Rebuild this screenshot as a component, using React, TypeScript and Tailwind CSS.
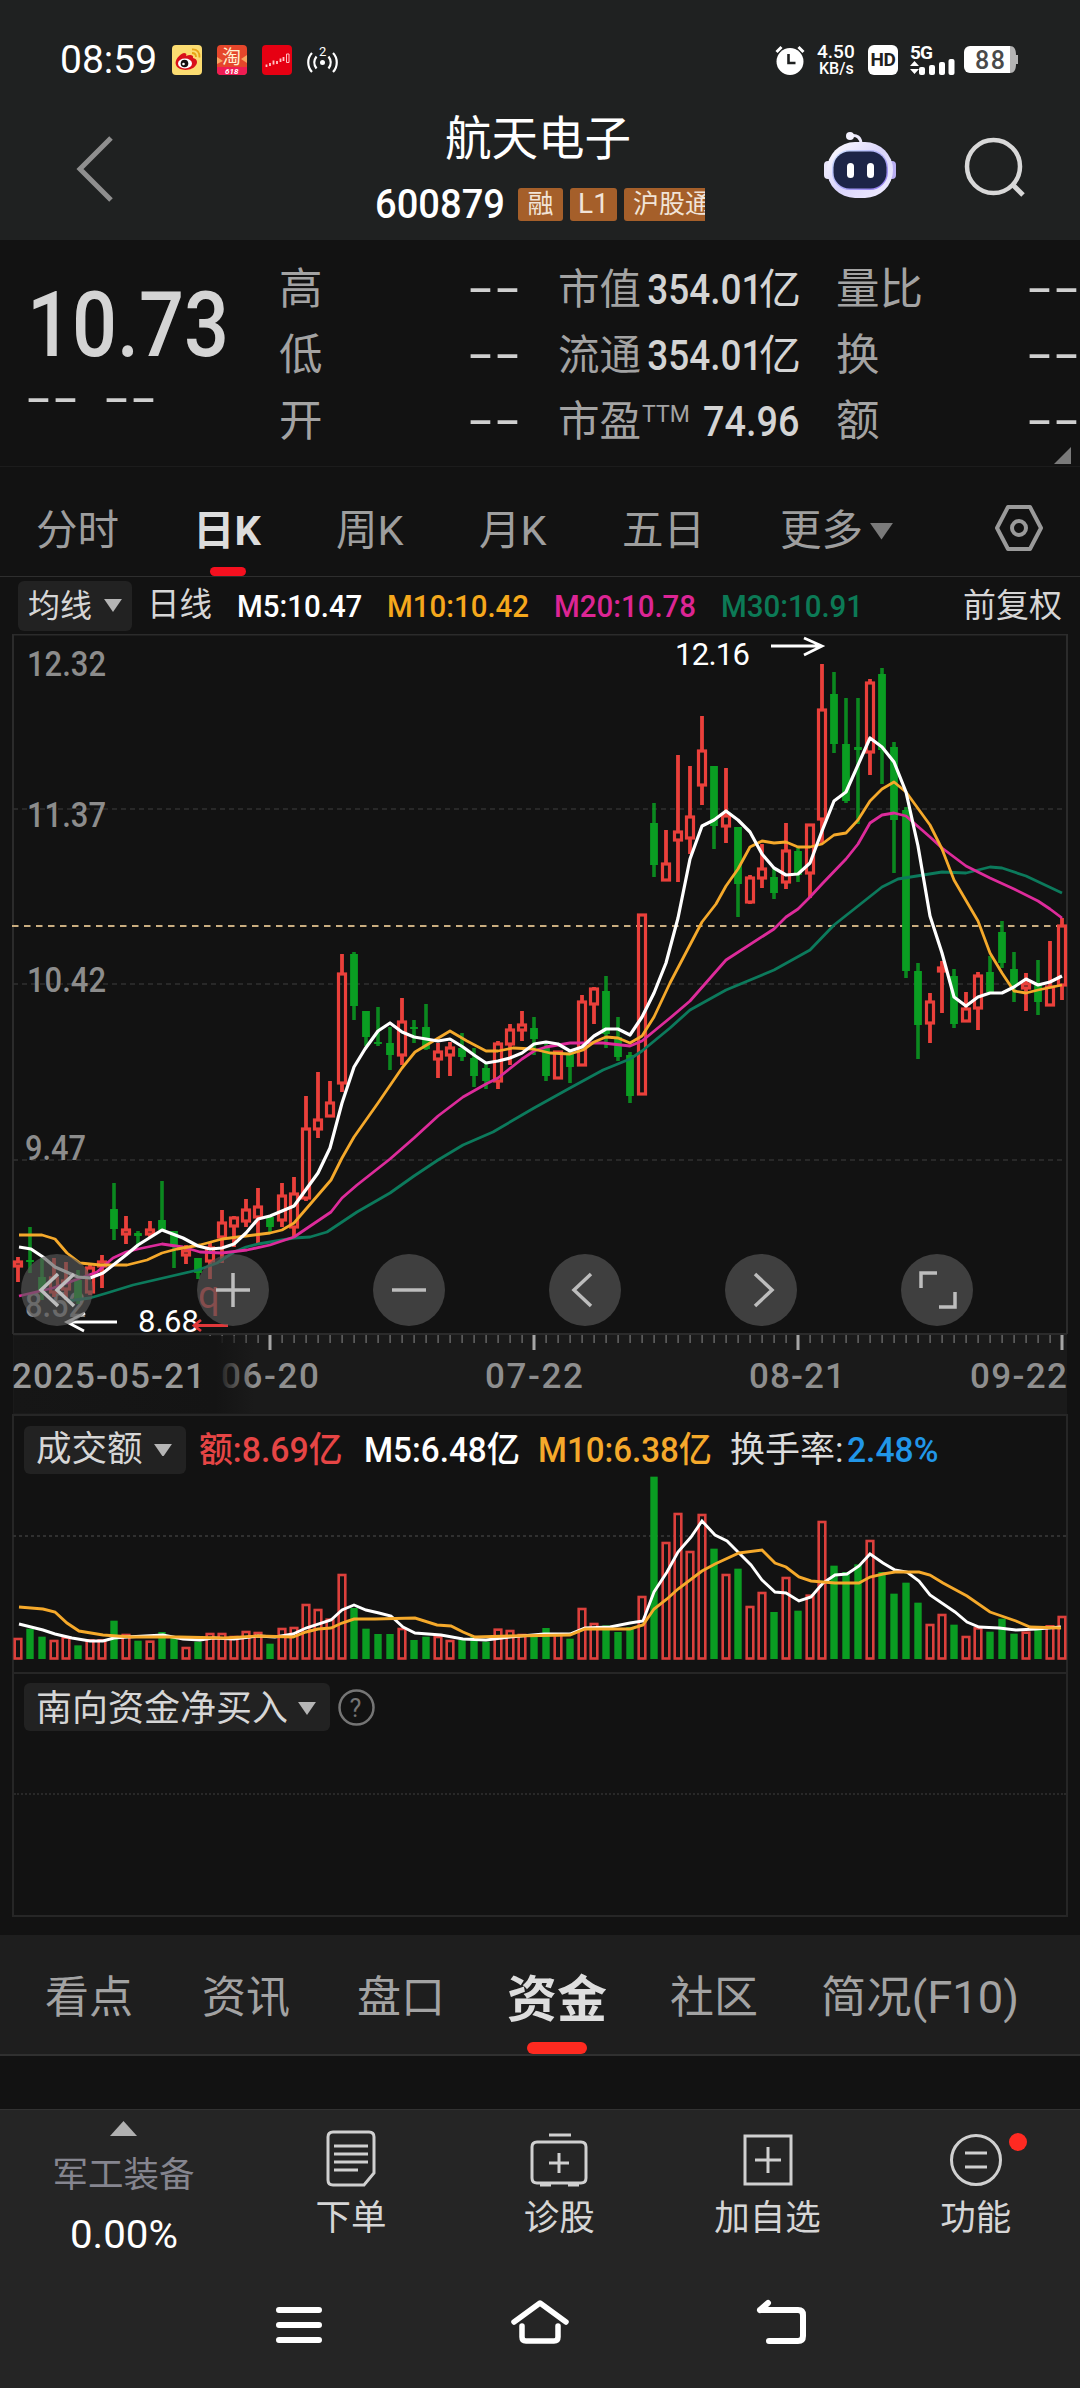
import type { ReactNode } from "react";

// [up, high, bodyTop, bodyBottom, low] in chart pixels
const candles: number[][] = [
  [1, 1257, 1261, 1267, 1282], [0, 1227, 1260, 1262, 1273], [0, 1258, 1277, 1293, 1300],
  [1, 1258, 1277, 1293, 1297], [1, 1262, 1280, 1290, 1300], [0, 1270, 1280, 1300, 1304],
  [1, 1263, 1267, 1293, 1295], [1, 1255, 1261, 1267, 1288], [0, 1183, 1209, 1229, 1240],
  [1, 1216, 1229, 1235, 1244], [0, 1231, 1233, 1236, 1245], [1, 1221, 1229, 1235, 1237],
  [0, 1181, 1220, 1230, 1231], [0, 1231, 1231, 1247, 1268], [1, 1245, 1250, 1256, 1264],
  [0, 1258, 1258, 1273, 1279], [1, 1242, 1247, 1262, 1279], [1, 1210, 1222, 1238, 1263],
  [1, 1216, 1217, 1227, 1247], [1, 1199, 1209, 1222, 1227], [1, 1188, 1206, 1218, 1245],
  [0, 1215, 1217, 1227, 1232], [1, 1183, 1195, 1221, 1227], [1, 1177, 1193, 1228, 1238],
  [1, 1096, 1128, 1199, 1201], [1, 1072, 1119, 1130, 1138], [1, 1081, 1102, 1117, 1117],
  [1, 954, 973, 1084, 1092], [0, 952, 954, 1006, 1020], [0, 1011, 1011, 1037, 1046],
  [0, 1007, 1042, 1044, 1046], [0, 1027, 1043, 1055, 1070], [1, 998, 1021, 1056, 1065],
  [0, 1020, 1027, 1029, 1043], [0, 1004, 1027, 1049, 1050], [1, 1043, 1051, 1060, 1078],
  [1, 1042, 1047, 1056, 1076], [0, 1033, 1048, 1057, 1061], [0, 1048, 1058, 1076, 1087],
  [0, 1063, 1068, 1081, 1089], [1, 1041, 1043, 1082, 1089], [1, 1024, 1029, 1045, 1065],
  [1, 1011, 1024, 1031, 1041], [0, 1017, 1028, 1039, 1055], [0, 1043, 1048, 1076, 1081],
  [1, 1051, 1051, 1079, 1079], [0, 1052, 1054, 1067, 1083], [1, 995, 1001, 1066, 1066],
  [1, 987, 988, 1005, 1024], [0, 976, 991, 1034, 1048], [0, 1017, 1037, 1057, 1061],
  [0, 1052, 1055, 1096, 1103], [1, 914, 914, 1095, 1095], [0, 803, 823, 865, 877],
  [1, 830, 863, 881, 881], [1, 755, 831, 841, 882], [1, 766, 816, 839, 854],
  [1, 716, 750, 786, 805], [0, 766, 766, 826, 849], [1, 768, 815, 827, 843],
  [0, 827, 827, 884, 917], [1, 875, 877, 903, 904], [1, 844, 868, 879, 888],
  [0, 868, 877, 893, 899], [1, 823, 850, 883, 889], [0, 846, 851, 875, 882],
  [1, 824, 824, 874, 898], [1, 664, 709, 820, 844], [0, 672, 694, 744, 753],
  [0, 698, 744, 801, 803], [0, 698, 747, 750, 824], [1, 679, 682, 753, 775],
  [0, 668, 674, 750, 784], [0, 742, 747, 820, 873], [0, 807, 810, 971, 978],
  [0, 963, 971, 1025, 1059], [1, 993, 1001, 1024, 1043], [1, 961, 967, 972, 1013],
  [0, 969, 976, 1024, 1028], [1, 992, 1008, 1022, 1022], [1, 972, 975, 1009, 1030],
  [0, 956, 972, 992, 993], [0, 921, 932, 963, 968], [0, 952, 969, 986, 1002],
  [1, 973, 983, 989, 1011], [0, 960, 984, 1002, 1015], [1, 941, 986, 1006, 1006],
  [1, 918, 925, 986, 1000],
];

// bar heights of the turnover chart, in thirds of a pixel
const turnover = [
  60, 88, 64, 54, 64, 38, 56, 56, 112, 72, 52, 52, 78, 66, 33, 49, 75, 75, 66, 81, 78, 43, 90,
  93, 162, 147, 118, 252, 150, 88, 72, 72, 90, 54, 64, 66, 54, 54, 64, 49, 88, 84, 72, 72, 90,
  72, 58, 150, 105, 98, 78, 93, 186, 544, 348, 435, 321, 432, 328, 252, 268, 156, 198, 138, 243,
  142, 190, 411, 277, 258, 281, 354, 258, 193, 226, 166, 102, 132, 100, 66, 92, 79, 118, 73, 79,
  92, 98, 126,
];

const ma5 =
  "19,1247 31,1249 43,1257 55,1267 78,1277 90,1278 103,1273 126,1255 138,1245 162,1230 183,1238 198,1246 210,1249 222,1248 234,1244 246,1233 258,1219 270,1216 294,1206 318,1173 330,1148 342,1103 354,1067 365,1049 378,1031 390,1023 402,1032 414,1037 426,1039 438,1041 450,1039 463,1047 474,1055 486,1063 498,1061 510,1058 522,1053 534,1044 546,1042 558,1044 570,1051 582,1047 594,1036 606,1029 618,1029 630,1035 642,1017 654,993 666,963 678,918 690,859 702,826 714,820 726,811 738,820 750,832 762,854 774,868 786,875 798,874 810,863 822,831 834,801 846,792 870,738 882,747 894,762 906,792 918,846 930,916 942,953 954,997 966,1006 978,997 990,993 1002,993 1014,987 1026,979 1038,985 1050,982 1062,976";
const ma10 =
  "19,1235 42,1235 55,1239 67,1253 80,1263 100,1265 127,1265 147,1260 162,1253 177,1249 200,1245 222,1239 246,1236 270,1233 282,1230 294,1223 331,1180 342,1158 354,1137 378,1103 402,1068 415,1052 430,1043 450,1031 467,1041 486,1051 498,1051 513,1048 533,1049 550,1053 570,1054 583,1050 594,1042 606,1037 618,1038 630,1043 642,1036 654,1017 670,983 702,922 716,904 726,886 738,869 750,847 762,841 774,843 786,842 798,847 810,847 822,844 834,835 846,833 858,820 870,801 882,789 894,782 906,792 930,825 942,849 954,880 978,921 990,953 1002,973 1014,991 1026,993 1038,990 1062,985";
const ma20 =
  "19,1296 53,1288 78,1279 97,1272 113,1258 126,1252 138,1249 162,1244 183,1247 200,1252 222,1253 247,1250 270,1245 294,1237 331,1212 342,1198 357,1185 390,1159 414,1138 438,1116 463,1097 486,1084 498,1078 522,1059 534,1051 546,1047 570,1043 603,1043 630,1046 642,1041 670,1018 690,1001 726,960 774,929 786,917 798,909 810,897 822,884 846,859 858,844 870,823 882,815 894,813 906,816 930,837 942,848 966,866 990,878 1014,889 1038,901 1050,909 1062,918";
const ma30 =
  "67,1301 90,1298 107,1293 133,1285 198,1270 217,1263 234,1252 246,1247 258,1244 294,1238 310,1237 327,1232 357,1212 390,1193 414,1176 438,1160 463,1145 493,1132 534,1108 570,1088 603,1070 630,1059 642,1051 670,1028 690,1010 726,990 774,970 810,950 834,925 858,906 882,887 898,879 942,872 966,873 990,867 1002,868 1026,876 1062,893";

const vol5 =
  "19,1624 31,1627 43,1630 55,1634 72,1638 90,1641 103,1641 114,1638 127,1637 163,1635 183,1639 200,1640 213,1638 234,1639 258,1636 275,1637 293,1634 306,1628 331,1620 342,1610 354,1605 366,1610 379,1613 391,1616 403,1627 415,1633 441,1635 463,1639 486,1640 510,1637 544,1634 570,1634 585,1628 610,1627 630,1623 643,1621 654,1592 667,1572 678,1552 691,1537 702,1521 715,1535 727,1541 739,1553 751,1565 762,1580 775,1592 786,1593 799,1601 811,1597 823,1583 835,1575 847,1574 859,1566 870,1554 883,1563 895,1570 907,1572 919,1581 930,1595 955,1612 967,1622 979,1627 999,1628 1016,1630 1036,1629 1061,1627";
const vol10 =
  "19,1607 43,1609 55,1612 67,1623 79,1631 103,1635 131,1637 179,1637 224,1638 258,1636 293,1637 306,1632 318,1629 331,1628 342,1623 354,1619 375,1619 415,1618 437,1625 451,1626 463,1632 475,1637 510,1636 570,1635 585,1629 630,1629 643,1625 654,1609 667,1599 678,1589 702,1571 715,1564 739,1553 762,1550 775,1563 786,1567 799,1577 811,1581 835,1583 859,1583 870,1577 883,1574 895,1572 919,1572 930,1575 943,1583 967,1596 990,1612 1016,1621 1030,1627 1061,1628";

const RED = "#ea403b";
const GREEN = "#0a9d22";

const quotes = [
  ["高", "市值", "354.01", "亿", "量比"],
  ["低", "流通", "354.01", "亿", "换"],
  ["开", "市盈", "74.96", "", "额"],
];

const yLabels: [string, number, number, number][] = [
  ["12.32", 27, 676, 79],
  ["11.37", 27, 827, 79],
  ["10.42", 27, 992, 79],
  ["9.47", 25, 1160, 61],
  ["8.52", 25, 1317, 61],
];

const Dashes = ({ className = "" }: { className?: string }) => (
  <span className={`inline-block origin-left scale-x-[1.62] pb-[6px] font-[DejaVu_Sans] text-[46px] leading-none text-[#cfcfcf] ${className}`}>
    --
  </span>
);

const Caret = ({ color = "#b5b5b5", w = 18 }: { color?: string; w?: number }) => (
  <svg width={w} height={w * 0.72} viewBox="0 0 18 13" fill={color}>
    <path d="M0 0h18L9 13z" />
  </svg>
);

// squeezed text, close to the narrow DIN digits
const Num = ({ children, className = "" }: { children: ReactNode; className?: string }) => (
  <span className={`block origin-left whitespace-nowrap font-medium ${className}`}>{children}</span>
);

const StatusBar = () => (
  <div className="flex h-[120px] items-center pl-[60px] pr-[62px] text-white">
    <span className="w-[112px] text-[39px]">08:59</span>
    <svg width="30" height="30" viewBox="0 0 30 30">
      <rect width="30" height="30" rx="4" fill="#fbdc71" />
      <path d="M4 20c-2-5 4-11 8-12 2 0 3 1 2 3 4-2 8-1 7 2 4 1 5 4 3 7-3 6-17 7-20 0z" fill="#d9101a" />
      <ellipse cx="13" cy="18.500" rx="7" ry="5" fill="#fff" />
      <circle cx="12.500" cy="18.500" r="3.800" fill="#111" />
      <circle cx="11.500" cy="19" r="1.300" fill="#fff" />
      <path d="M20 8c3 0 4 2 4 4M20 4.500c5-.5 8 3 7.500 8" fill="none" stroke="#e8a416" strokeWidth="1.800" />
    </svg>
    <svg className="ml-[15px]" width="30" height="30" viewBox="0 0 30 30">
      <rect width="30" height="30" rx="4" fill="#e5462b" />
      <path d="M0 22h30v4a4 4 0 0 1-4 4H4a4 4 0 0 1-4-4z" fill="#ef1c53" />
      <path d="M0 12l6 4-6 3zM30 10l-6 4 6 4z" fill="#f6a55f" />
      <text x="5" y="19" fontSize="19" fill="#fff0cf" fontFamily="Noto Sans CJK SC">淘</text>
      <text x="8" y="29" fontSize="8" fontWeight="700" fontStyle="italic" fill="#fff" fontFamily="Roboto">618</text>
    </svg>
    <svg className="ml-[15px]" width="30" height="30" viewBox="0 0 30 30" fill="none" stroke="#ffc4c4">
      <rect width="30" height="30" rx="4" fill="#e60012" stroke="none" />
      <path d="M4.500 19.500v2.500M8 18v3M11.500 15.500v4M15 16v3M18.500 13.500v3.500M21.500 12v4" strokeWidth="1.800" />
      <path d="M24.500 9h2.500v8.500h-2.500z" strokeWidth="1" />
    </svg>
    <svg className="ml-[15px]" width="31" height="30" viewBox="0 0 31 30" fill="none" stroke="#fff" strokeWidth="2.200">
      <path d="M5 8c-5 5-5 14 0 19M26 8c5 5 5 14 0 19M9.500 11.500c-3 4-3 8 0 12M21.500 11.500c3 4 3 8 0 12" />
      <circle cx="15.500" cy="17.500" r="2.500" fill="#fff" stroke="none" />
      <text x="12" y="11" fontSize="13" fill="#fff" stroke="none" fontFamily="Roboto">2</text>
    </svg>

    <svg className="ml-auto" width="30" height="30" viewBox="0 0 30 30" fill="none" stroke="#fff">
      <circle cx="15" cy="16.500" r="13.500" fill="#fff" stroke="none" />
      <path d="M1.500 7l5-5M28.500 7l-5-5" strokeWidth="3" />
      <path d="M13.500 9v9h7" stroke="#1e2020" strokeWidth="2.600" />
    </svg>
    <div className="ml-3 flex w-[51px] flex-col text-[19px] font-medium leading-[16px]">
      <span className="whitespace-nowrap">4.50</span>
      <span className="pl-[2px] text-[16px] leading-[17px]">KB/s</span>
    </div>
    <div className="flex h-[30px] w-[30px] items-center justify-center rounded-md bg-white text-[19px] font-bold tracking-[-0.5px] text-[#1e2020]">
      HD
    </div>
    <svg className="ml-[12px]" width="46" height="32" viewBox="0 0 46 32" fill="#fff">
      <text x="0" y="15" fontSize="19" fontWeight="700" textLength="23" fontFamily="Roboto">5G</text>
      <path d="M0 22h9l-4.500-5zM0 25h9l-4.500 5z" />
      <rect x="9" y="23" width="6" height="8" rx="2" />
      <rect x="19" y="21" width="6" height="10" rx="2" />
      <rect x="29" y="18" width="6" height="13" rx="2" />
      <rect x="38.500" y="15" width="6" height="16" rx="2" />
    </svg>
    <svg className="ml-2" width="54" height="28" viewBox="0 0 54 28">
      <path d="M46 0c4 0 6 3 6 9h2v9h-2c0 6-2 9-6 9z" fill="#b4b4b4" />
      <path d="M6 0h40v27H6a6 6 0 0 1-6-6V6a6 6 0 0 1 6-6z" fill="#fff" />
      <text x="11" y="22.500" fontSize="25" fontWeight="500" textLength="30" fill="#4a4a4a" fontFamily="Roboto">88</text>
    </svg>
  </div>
);

const TitleBar = () => (
  <div className="grid h-[120px] grid-cols-[375px_449px_140px_116px]">
    <svg className="ml-[75px] mt-[15px]" width="42" height="68" viewBox="0 0 42 68" fill="none" stroke="#8f8f8f" strokeWidth="5">
      <path d="M36 3L5 34l31 31" />
    </svg>
    <div className="flex flex-col">
      <div className="h-[64px] pl-[70px] text-[46.500px] leading-[38px] text-white">航天电子</div>
      <div className="flex h-[40px] w-[330px] items-center gap-[7px] overflow-hidden">
        <Num className="w-[136px] scale-x-[.93] text-[41px] leading-none text-white">600879</Num>
        <span className="flex h-[33px] w-[45px] shrink-0 items-center justify-center rounded-[3px] bg-[#a55f2a] text-[26px] text-[#f1e4d8]">融</span>
        <span className="flex h-[33px] w-[47px] shrink-0 items-center justify-center rounded-[3px] bg-[#a55f2a] text-[28px] text-[#f1e4d8]">L1</span>
        <span className="flex h-[33px] w-[96px] shrink-0 items-center rounded-[3px] bg-[#a55f2a] pl-[9px] text-[26px] text-[#f1e4d8]">沪股通</span>
      </div>
    </div>
    <svg className="mt-[11px]" width="72" height="68" viewBox="0 0 72 68">
      <defs>
        <linearGradient id="shell" x1="0" y1="0" x2="1" y2="1">
          <stop offset="0" stopColor="#ffffff" />
          <stop offset=".5" stopColor="#d9d4fb" />
          <stop offset="1" stopColor="#f3f0ff" />
        </linearGradient>
        <linearGradient id="rim" x1="0" y1="0" x2="1" y2="1">
          <stop offset="0" stopColor="#cfe4ff" />
          <stop offset="1" stopColor="#8f77ee" />
        </linearGradient>
      </defs>
      <path d="M26 5c7-2 11 2 11 8" fill="none" stroke="#ece9fb" strokeWidth="3" />
      <circle cx="26" cy="5" r="4" fill="#f4f2ff" />
      <rect x="0" y="30" width="10" height="18" rx="4" fill="#e9e6fb" />
      <rect x="62" y="30" width="10" height="18" rx="4" fill="#b9aef2" />
      <rect x="3" y="11" width="66" height="56" rx="28" fill="url(#shell)" />
      <rect x="8" y="19" width="56" height="40" rx="18" fill="url(#rim)" />
      <rect x="9.500" y="20.500" width="53" height="37" rx="16" fill="#1d2547" />
      <rect x="23" y="32" width="7" height="15" rx="3.500" fill="#fff" />
      <rect x="43" y="32" width="7" height="15" rx="3.500" fill="#fff" />
    </svg>
    <svg width="62" height="80" viewBox="965 120 62 80" fill="none" stroke="#d8d8d8">
      <circle cx="994.500" cy="166.500" r="26.500" strokeWidth="4.500" />
      <path d="M1013 184l11 11" strokeWidth="5" />
    </svg>
  </div>
);

const Quote = () => (
  <div className="flex h-[227px] border-b border-[#1c1c1c]">
    <div className="w-[279px] pt-[50px]">
      <div className="h-[70px] w-[230px] origin-left scale-x-[.87] pl-[31px] text-[91px] font-medium leading-[70px] text-[#d4d4d4]">10.73</div>
      <div className="mt-[14px] flex pl-[25px]">
        <Dashes className="w-[78px]" />
        <Dashes />
      </div>
    </div>
    <div className="flex flex-1 flex-col pt-[17px]">
      {quotes.map(([a, b, value, unit, c]) => (
        <div key={a} className="grid h-[66px] grid-cols-[188px_91px_278px_190px_54px] items-center text-[43.500px] leading-none text-[#a3a3a3]">
          <span>{a}</span>
          <Dashes />
          <span className="flex items-center">
            <span className="w-[84px] text-[41.500px]">{b}</span>
            {!unit && <span className="-mt-4 w-[61px] text-[23px]">TTM</span>}
            <Num className={unit ? "w-[117px] scale-x-[.88] pl-[6px] text-[42px] text-[#d4d4d4]" : "scale-x-[.9] text-[42px] text-[#d4d4d4]"}>{value}</Num>
            <span className="text-[42px] text-[#d4d4d4]">{unit}</span>
          </span>
          <span>{c}</span>
          <Dashes />
        </div>
      ))}
      <svg className="-mt-2 mr-[9px] self-end" width="17" height="17" viewBox="0 0 17 17" fill="#7a7a7a">
        <path d="M17 0v17H0z" />
      </svg>
    </div>
  </div>
);

const PeriodTabs = () => (
  <div className="mt-[13px] grid h-[97px] grid-cols-[161px_139px_143px_143px_158px_214px_86px] items-center border-b border-[#2e2e2e] pl-[36px] text-[41.500px] text-[#9e9e9e]">
    <span className="pt-[7px]">分时</span>
    <span className="flex h-full flex-col font-bold text-[#dcdcdc]">
      <span className="-ml-[4px] h-[87px] leading-[102px]">日K</span>
      <i className="ml-[13px] h-[9px] w-[36px] rounded-full bg-[#f5101f]" />
    </span>
    <span className="pt-[7px]">周K</span>
    <span className="pt-[7px]">月K</span>
    <span className="pt-[7px]">五日</span>
    <span className="flex items-center gap-[7px] pt-[7px]">
      更多 <Caret color="#7a7a7a" w={23} />
    </span>
    <svg width="50" height="50" viewBox="0 0 50 50" fill="none" stroke="#9a9a9a" strokeWidth="4">
      <path d="M14 4h22l11 21-11 21H14L3 25z" strokeLinejoin="round" />
      <circle cx="25" cy="25" r="7" />
    </svg>
  </div>
);

const MaRow = () => (
  <div className="grid h-[57px] grid-cols-[129px_90px_150px_167px_167px_242px_1fr] items-center pl-[18px] text-[32px] leading-none text-[#d6d6d6]">
    <span className="flex h-[50px] w-[114px] items-center justify-between rounded-md bg-[#222] px-[10px]">
      均线 <Caret />
    </span>
    <span className="text-[32.500px]">日线</span>
    <Num className="scale-x-[.92] text-white">M5:10.47</Num>
    <Num className="scale-x-[.92] text-[#f5a81c]">M10:10.42</Num>
    <Num className="scale-x-[.92] text-[#dc2594]">M20:10.78</Num>
    <Num className="scale-x-[.92] text-[#0c7a56]">M30:10.91</Num>
    <span className="text-[33px]">前复权</span>
  </div>
);

const Candle = ({ i, data }: { i: number; data: number[] }) => {
  const [up, high, top, bottom, low] = data;
  const x = 18 + i * 12;
  if (!up) {
    return (
      <g fill={GREEN}>
        <rect x={x - 1.8} y={high} width="3.600" height={low - high} opacity=".85" />
        <rect x={x - 3.9} y={top} width="7.800" height={Math.max(bottom - top, 2)} />
      </g>
    );
  }
  return (
    <g stroke={RED} strokeWidth="3.800" fill="none">
      <path d={`M${x} ${high}V${top}M${x} ${bottom}V${low}`} />
      <rect x={x - 3.5} y={top + 1} width="7" height={Math.max(bottom - top - 2, 1)} strokeWidth="3.200" />
    </g>
  );
};

const tools: ReactNode[] = [
  <path key="b" d="M37 20L20 36l17 16M53 20L36 36l17 16" />,
  <path key="p" d="M36 19v34M19 36h34" />,
  <path key="m" d="M19 36h34" />,
  <path key="l" d="M42 20L25 36l17 16" />,
  <path key="r" d="M30 20l17 16-17 16" />,
  <path key="f" d="M20 34V19h16M54 38v15H38" />,
];

const KLine = () => (
  <div className="relative h-[780px]">
    <svg width="1080" height="780" viewBox="0 634 1080 780" fontFamily="Roboto, sans-serif">
      <defs>
        <linearGradient id="fade" x1="0" x2="1">
          <stop offset="0" stopColor="#161616" />
          <stop offset=".84" stopColor="#141414" />
          <stop offset="1" stopColor="#141414" stopOpacity="0" />
        </linearGradient>
      </defs>
      <rect x="13" y="1334" width="1054" height="80" fill="#1a1a1a" />
      <path d="M13 1334V634.500H1067V1334M13 1334H1067" fill="none" stroke="#2b2b2b" strokeWidth="2" />
      <path d="M13 809H1066M13 984H1066M13 1160H1066" stroke="#303030" strokeWidth="1.500" strokeDasharray="5 4" />
      <g fontSize="35" fontWeight="500" fill="#8c8c8c">
        {yLabels.map(([label, x, y, w]) => (
          <text key={label} x={x} y={y} textLength={w} lengthAdjust="spacingAndGlyphs">
            {label}
          </text>
        ))}
      </g>
      <path d="M12 926H1066" stroke="#c9ad80" strokeWidth="2.200" strokeDasharray="6.500 5.500" />
      {candles.map((data, i) => (
        <Candle key={i} i={i} data={data} />
      ))}
      <g fill="none" strokeWidth="2.800" strokeLinejoin="round">
        <polyline points={ma30} stroke="#0c7a5c" />
        <polyline points={ma20} stroke="#dd2b9b" />
        <polyline points={ma10} stroke="#f5a92b" />
        <polyline points={ma5} stroke="#fff" strokeWidth="3.200" />
      </g>
      <g fill="#fff" stroke="none" fontSize="31">
        <text x="675" y="665" textLength="75">12.16</text>
        <text x="138" y="1332" textLength="61">8.68</text>
        <text x="198" y="1308" fontSize="38" fill="#d8393a">q</text>
      </g>
      <g fill="none" strokeWidth="2.800">
        <path d="M771 646H822M804 638l18 8-18 9" stroke="#fff" />
        <path d="M117 1322H68M85 1313l-18 9 17 9" stroke="#fff" />
        <path d="M228 1325.500H194M201 1320l-7 5.500 7 5.500" stroke="#e0383a" />
      </g>
      <g fontSize="35" fontWeight="500" fill="#8e8e8e">
        <text x="221" y="1388" textLength="98">06-20</text>
        <text x="485" y="1388" textLength="98">07-22</text>
        <text x="749" y="1388" textLength="96">08-21</text>
        <text x="970" y="1388" textLength="97">09-22</text>
      </g>
      {candles.map((_, i) =>
        i < 16 ? null : (
          <rect
            key={i}
            x={(i - 21) % 22 === 0 ? 16.500 + i * 12 : 17.5 + i * 12}
            y="1335"
            width={(i - 21) % 22 === 0 ? 3 : 1.2}
            height={(i - 21) % 22 === 0 ? 15 : 8}
            fill={(i - 21) % 22 === 0 ? "#a5a5a5" : "#777"}
          />
        )
      )}
      <rect x="14" y="1336" width="240" height="77" fill="url(#fade)" />
      <text x="12" y="1388" fontSize="35" fontWeight="500" textLength="193" fill="#999">2025-05-21</text>
    </svg>
    <div className="absolute left-[21px] top-[620px] flex gap-[104px]">
      {tools.map((icon, i) => (
        <svg key={i} width="72" height="72" viewBox="0 0 72 72" fill="none" stroke="#bdbdbd" strokeWidth="3.500">
          <circle cx="36" cy="36" r="36" fill="#585858" fillOpacity=".65" stroke="none" />
          {icon}
        </svg>
      ))}
    </div>
  </div>
);

const Turnover = () => (
  <div className="relative mx-3 h-[258px] border-x-2 border-t-2 border-[#262626]">
    <div className="grid h-[68px] grid-cols-[175px_165px_174px_192px_117px_1fr] items-center pl-[10px] text-[35px] leading-none">
      <span className="flex h-[48px] w-[162px] items-center justify-between rounded-md bg-[#222] pl-[12px] pr-[14px] text-[35.500px] text-[#d6d6d6]">
        成交额 <Caret />
      </span>
      <Num className="scale-x-[.965] text-[#e64545]">额:8.69亿</Num>
      <Num className="scale-x-[.95] text-white">M5:6.48亿</Num>
      <Num className="scale-x-[.945] text-[#f5a92b]">M10:6.38亿</Num>
      <span className="text-[#dcdcdc]">换手率:</span>
      <Num className="scale-x-[.96] text-[#2196e8]">2.48%</Num>
    </div>
    <svg className="-ml-[14px] overflow-visible" width="1080" height="186" viewBox="0 1484 1080 186" fill="none">
      <path d="M13 1536H1066" stroke="#303030" strokeWidth="2" strokeDasharray="3 3" />
      {turnover.map((v, i) => {
        const h = v / 3;
        return candles[i][0] ? (
          <rect key={i} x={14.7 + i * 12} y={1659 - h} width="6.600" height={h - 0.5} stroke="#dc403c" strokeWidth="2.600" />
        ) : (
          <rect key={i} x={14.3 + i * 12} y={1658 - h} width="7.400" height={h + 1} fill={GREEN} />
        );
      })}
      <polyline points={vol5} stroke="#fff" strokeWidth="2.900" />
      <polyline points={vol10} stroke="#f5a92b" strokeWidth="2.900" />
    </svg>
  </div>
);

const SouthFunds = () => (
  <div className="mx-3 h-[245px] border-2 border-[#262626] pl-[10px] pt-[9px]">
    <div className="flex items-center gap-[8px]">
      <span className="flex h-[48px] w-[306px] items-center justify-between rounded-md bg-[#222] pl-[12px] pr-[14px] pt-[3px] text-[36px] text-[#d6d6d6]">
        南向资金净买入 <Caret />
      </span>
      <svg width="37" height="37" viewBox="0 0 37 37" fill="none" stroke="#757575" strokeWidth="2.500">
        <circle cx="18.500" cy="18.500" r="17" />
        <text x="11.500" y="27.500" fontSize="25" fill="#757575" stroke="none" fontFamily="Roboto">?</text>
      </svg>
    </div>
    <div className="-ml-[10px] mt-[62px] border-t-2 border-dotted border-[#282828]" />
  </div>
);

const DetailTabs = () => (
  <div className="mt-[18px] grid h-[121px] grid-cols-[157px_155px_152px_161px_151px_1fr] items-center border-b-2 border-[#303030] bg-[#1e1e1e] pl-[45px] text-[44px] text-[#a3a3a3]">
    <span className="pt-[7px]">看点</span>
    <span className="pt-[7px]">资讯</span>
    <span className="pt-[7px]">盘口</span>
    <span className="flex h-full flex-col text-[50px] font-bold text-[#dedede]">
      <span className="-ml-[2px] h-[107px] leading-[130px]">资金</span>
      <i className="ml-[18px] h-[12px] w-[60px] rounded-full bg-[#ff2a20]" />
    </span>
    <span className="pt-[7px]">社区</span>
    <span className="origin-left scale-x-[1.03] whitespace-nowrap pt-[7px]">简况(F10)</span>
  </div>
);

const actions = [
  {
    label: "下单",
    icon: <path d="M14 4h36q5 0 5 5v36L45 57H14q-5 0-5-5V9q0-5 5-5zM15 18h34M15 26h34M15 34h34M15 42h24" />,
  },
  {
    label: "诊股",
    icon: <path d="M22 7h22M10 14h44q5 0 5 5v31q0 5-5 5H10q-5 0-5-5V19q0-5 5-5zM32 25v20M22 35h20M13 57h11M41 57h11" />,
  },
  { label: "加自选", icon: <path d="M9 8h46v48H9zM32 19v26M19 32h26" /> },
  {
    label: "功能",
    icon: (
      <>
        <circle cx="32" cy="32" r="24.500" />
        <path d="M21 25h22M21 39h22" />
      </>
    ),
  },
];

const ActionBar = () => (
  <div className="grid h-[151px] grid-cols-[247px_833px] border-t border-[#323232] bg-[#252525]">
    <div className="flex flex-col items-center pt-[11px]">
      <svg width="27" height="15" viewBox="0 0 27 15" fill="#b0b0b0">
        <path d="M13.500 0L27 15H0z" />
      </svg>
      <span className="mt-[19px] text-[35.500px] leading-[40px] text-[#85858f]">军工装备</span>
      <span className="mt-[18px] scale-x-[1.06] text-[38px] leading-[44px] text-white">0.00%</span>
    </div>
    <div className="grid grid-cols-4">
      {actions.map(({ label, icon }) => (
        <div key={label} className="relative flex flex-col items-center pt-[18px]">
          <svg width="64" height="64" viewBox="0 0 64 64" fill="none" stroke="#d0d0d0" strokeWidth="3">
            {icon}
          </svg>
          <span className="mt-[6px] text-[35.500px] leading-[40px] text-[#d6d6d6]">{label}</span>
          {label === "功能" && <i className="absolute right-[53px] top-[23px] h-[18px] w-[18px] rounded-full bg-[#ff2a22]" />}
        </div>
      ))}
    </div>
  </div>
);

const NavBar = () => (
  <div className="flex flex-1 items-start justify-center gap-[183px] bg-[#252525] pt-[34px]">
    <svg width="56" height="60" viewBox="0 0 56 60" stroke="#fff" strokeWidth="6" strokeLinecap="round">
      <path d="M8 16h40M8 31h40M8 46h40" />
    </svg>
    <svg width="60" height="60" viewBox="0 0 60 60" fill="none" stroke="#fff" strokeWidth="5.500" strokeLinecap="round" strokeLinejoin="round">
      <path d="M4 28L30 9l26 19M12 32v11q0 4 4 4h28q4 0 4-4V32" />
    </svg>
    <svg width="56" height="60" viewBox="0 0 56 60" fill="none" stroke="#fff" strokeWidth="6" strokeLinecap="round" strokeLinejoin="round">
      <path d="M16 47h29q5 0 5-5V21q0-5-5-5H7M7 16l8-7" />
    </svg>
  </div>
);

const App = () => {
  return (
    <div className="flex h-[2388px] w-[1080px] flex-col overflow-hidden bg-[#121212] font-[Roboto,Noto_Sans_CJK_SC,sans-serif]">
      <div className="bg-[#1f2121]">
        <StatusBar />
        <TitleBar />
      </div>
      <Quote />
      <PeriodTabs />
      <MaRow />
      <KLine />
      <Turnover />
      <SouthFunds />
      <DetailTabs />
      <div className="h-[53px]" />
      <ActionBar />
      <NavBar />
    </div>
  );
};

export default App;
